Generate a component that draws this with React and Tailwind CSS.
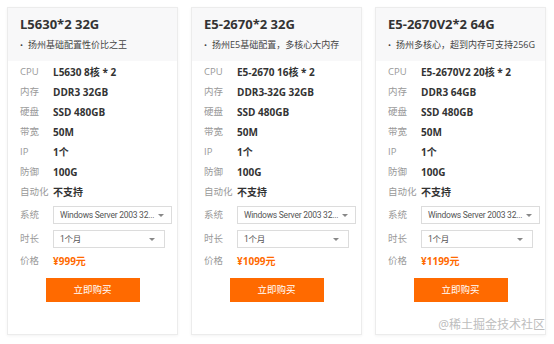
import React from "react";

const font = { fontFamily: '"Open Sans", "Noto Sans CJK SC", sans-serif' };

const plans = [
    {
        title: "L5630*2 32G",
        desc: "扬州基础配置性价比之王",
        cpu: "L5630 8核 * 2",
        mem: "DDR3 32GB",
        price: "¥999元",
    },
    {
        title: "E5-2670*2 32G",
        desc: "扬州E5基础配置，多核心大内存",
        cpu: "E5-2670 16核 * 2",
        mem: "DDR3-32G 32GB",
        price: "¥1099元",
    },
    {
        title: "E5-2670V2*2 64G",
        desc: "扬州多核心，超到内存可支持256G",
        cpu: "E5-2670V2 20核 * 2",
        mem: "DDR3 64GB",
        price: "¥1199元",
    },
];

const Row = ({ label, children }) => (
    <div className="flex h-[20px] items-center">
        <span className="w-[33px] shrink-0 text-[9.5px] text-[#999999]">{label}</span>
        {children}
    </div>
);

const Value = ({ children }) => (
    <span className="text-[10px] font-bold text-[#333333]">{children}</span>
);

const Select = ({ value }) => (
    <div className="flex h-[18px] w-[119px] items-center justify-between border border-[#dcdcdc] bg-white pl-[6px] pr-[9px] text-[#555555]">
        <span className="whitespace-nowrap font-['Roboto','Noto_Sans_CJK_SC',sans-serif] text-[8.5px] tracking-[-0.25px]">{value}</span>
        <span className="ml-1 h-0 w-0 shrink-0 border-x-[3px] border-t-[3px] border-x-transparent border-t-[#888888]" />
    </div>
);

const Card = ({ plan }) => (
    <div className="flex h-[328px] w-[171px] flex-col border border-[#ececec] bg-white shadow-[0_1px_3px_rgba(0,0,0,0.05)]">
        <div className="bg-[#f8f8f9] px-3 pb-[8px] pt-[8px]">
            <h3 className="text-[13px] font-bold leading-[16px] text-[#333333]">{plan.title}</h3>
            <p className="mt-[5px] flex items-center gap-[5px] whitespace-nowrap text-[9px] leading-[16px] text-[#444444]">
                <span className="text-[8px]">•</span>
                {plan.desc}
            </p>
        </div>
        <div className="flex flex-col px-3 pt-[1px]">
            <Row label="CPU"><Value>{plan.cpu}</Value></Row>
            <Row label="内存"><Value>{plan.mem}</Value></Row>
            <Row label="硬盘"><Value>SSD 480GB</Value></Row>
            <Row label="带宽"><Value>50M</Value></Row>
            <Row label="IP"><Value>1个</Value></Row>
            <Row label="防御"><Value>100G</Value></Row>
            <Row label="自动化"><Value>不支持</Value></Row>
            <div className="mt-[4px] flex h-[18px] items-center">
                <span className="w-[33px] shrink-0 text-[9.5px] text-[#999999]">系统</span>
                <Select value="Windows Server 2003 32..." />
            </div>
            <div className="mt-[6px] flex h-[18px] items-center">
                <span className="w-[33px] shrink-0 text-[9.5px] text-[#999999]">时长</span>
                <Select value="1个月" />
            </div>
            <div className="mt-[3px]">
                <Row label="价格">
                    <span className="text-[10px] font-bold text-[#ff6a00]">{plan.price}</span>
                </Row>
            </div>
            <div className="mt-[7px] flex justify-center">
                <button className="h-[24px] w-[94px] bg-[#ff6a00] text-[9.5px] text-white">立即购买</button>
            </div>
        </div>
    </div>
);

export default function App() {
    return (
        <div className="relative h-[344px] w-[554px] bg-white" style={font}>
            <div className="flex gap-[13px] pl-[7px] pt-[7px]">
                {plans.map((p) => (
                    <Card key={p.title} plan={p} />
                ))}
            </div>
            <span className="absolute bottom-[10px] right-[9px] text-[12px] text-[#bdbdbd] [text-shadow:0_0_2px_#fff]">
                @稀土掘金技术社区
            </span>
        </div>
    );
}
